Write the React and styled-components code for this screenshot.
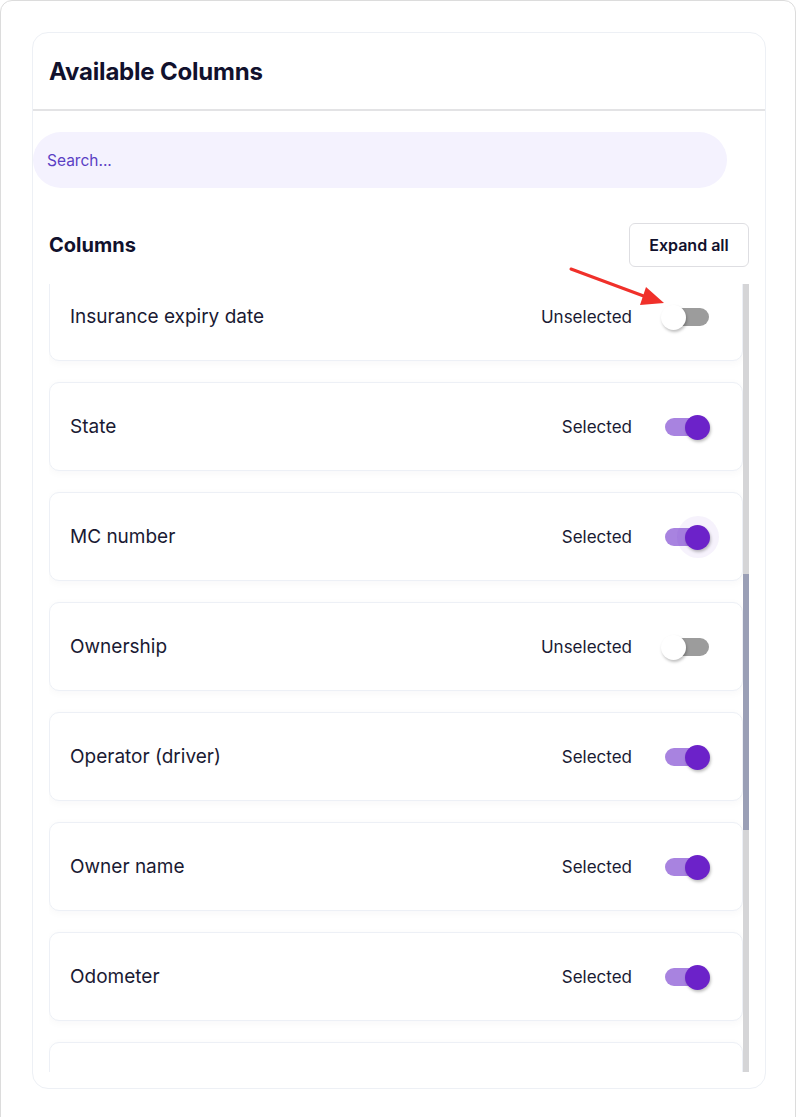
import React, { useLayoutEffect, useRef } from "react";
import styled, { createGlobalStyle } from "styled-components";

const GlobalStyle = createGlobalStyle`
  html, body {
    margin: 0;
    padding: 0;
    background: #ffffff;
    font-family: "Inter", "Noto Sans", sans-serif;
    color: #12122e;
  }
  * { box-sizing: border-box; }
`;

const columns = [
  { name: "Insurance expiry date", on: false },
  { name: "State", on: true },
  { name: "MC number", on: true, hover: true },
  { name: "Ownership", on: false },
  { name: "Operator (driver)", on: true },
  { name: "Owner name", on: true },
  { name: "Odometer", on: true },
  { name: "Fuel type", on: true },
];

const Frame = styled.div`
  position: relative;
  width: 796px;
  min-height: 1140px;
  border: 1px solid #dcdcdc;
  border-radius: 12px;
  padding: 31px 0 0 31px;
`;

const Card = styled.div`
  width: 734px;
  height: 1057px;
  border: 1px solid #edf0f5;
  border-radius: 16px;
  display: flex;
  flex-direction: column;
  overflow: hidden;
`;

const Header = styled.div`
  height: 78px;
  padding: 0 16px;
  display: flex;
  align-items: center;
  border-bottom: 2px solid #e3e3e5;
`;

const Title = styled.h2`
  margin: 0;
  font-size: 24px;
  font-weight: 700;
  letter-spacing: -0.2px;
  color: #11112d;
`;

const Body = styled.div`
  flex: 1;
  display: flex;
  flex-direction: column;
  padding: 21px 16px 16px 0;
  min-height: 0;
`;

const Search = styled.input`
  width: 694px;
  height: 56px;
  border: none;
  outline: none;
  border-radius: 28px;
  background: #f4f2fe;
  padding: 0 14px;
  font-family: inherit;
  font-size: 15.5px;
  color: #4a32b8;
  &::placeholder {
    color: #5b3fc4;
  }
`;

const SectionRow = styled.div`
  margin-top: 35px;
  padding-left: 16px;
  display: flex;
  align-items: center;
  justify-content: space-between;
`;

const SectionTitle = styled.h3`
  margin: 0;
  font-size: 20px;
  font-weight: 700;
  color: #11112d;
`;

const ExpandButton = styled.button`
  width: 120px;
  height: 44px;
  border: 1px solid #dedee2;
  border-radius: 6px;
  background: #ffffff;
  font-family: inherit;
  font-size: 16px;
  font-weight: 600;
  color: #11112d;
`;

const ListArea = styled.div`
  margin: 17px 0 0 16px;
  flex: 1;
  min-height: 0;
  display: flex;
`;

const List = styled.div`
  flex: 1;
  min-height: 0;
  overflow: hidden;
  display: flex;
  flex-direction: column;
  gap: 21px;
`;

const ScrollTrack = styled.div`
  width: 6px;
  background: #d5d5d7;
  display: flex;
  flex-direction: column;
`;

const ScrollThumb = styled.div`
  margin-top: 290px;
  height: 256px;
  background: #9a9fb6;
`;

const Item = styled.div`
  flex: 0 0 89px;
  border: 1px solid #edf0f6;
  border-radius: 10px;
  background: #ffffff;
  box-shadow: 0 2px 8px rgba(20, 20, 60, 0.035);
  display: flex;
  align-items: center;
  padding: 0 33px 0 20px;
`;

const Label = styled.span`
  flex: 1;
  font-size: 19px;
  color: #1a1a33;
`;

const Status = styled.span`
  font-size: 17px;
  color: #1a1a33;
  margin-right: 33px;
`;

const Track = styled.div`
  position: relative;
  width: 44px;
  height: 18px;
  border-radius: 9px;
  background: ${(p) => (p.$on ? "#a883e0" : "#9c9c9c")};
`;

const Halo = styled.div`
  position: absolute;
  top: -12px;
  left: 12px;
  width: 42px;
  height: 42px;
  border-radius: 50%;
  background: rgba(109, 34, 201, 0.06);
`;

const Thumb = styled.div`
  position: absolute;
  top: -3px;
  left: ${(p) => (p.$on ? "20px" : "-4px")};
  width: 25px;
  height: 25px;
  border-radius: 50%;
  background: ${(p) => (p.$on ? "#6c22c9" : "#ffffff")};
  box-shadow: 1px 2px 3px rgba(0, 0, 0, 0.25);
`;

const Arrow = styled.svg`
  position: absolute;
  left: 0;
  top: 0;
  pointer-events: none;
`;

function Toggle({ on, hover }) {
  return (
    <Track $on={on}>
      {hover && <Halo />}
      <Thumb $on={on} />
    </Track>
  );
}

export default function App() {
  const listRef = useRef(null);

  useLayoutEffect(() => {
    if (listRef.current) listRef.current.scrollTop = 12;
  }, []);

  return (
    <>
      <GlobalStyle />
      <Frame>
        <Card>
          <Header>
            <Title>Available Columns</Title>
          </Header>
          <Body>
            <Search placeholder="Search..." />
            <SectionRow>
              <SectionTitle>Columns</SectionTitle>
              <ExpandButton>Expand all</ExpandButton>
            </SectionRow>
            <ListArea>
              <List ref={listRef}>
                {columns.map((c) => (
                  <Item key={c.name}>
                    <Label>{c.name}</Label>
                    <Status>{c.on ? "Selected" : "Unselected"}</Status>
                    <Toggle on={c.on} hover={c.hover} />
                  </Item>
                ))}
              </List>
              <ScrollTrack>
                <ScrollThumb />
              </ScrollTrack>
            </ListArea>
          </Body>
        </Card>
        <Arrow width="796" height="400" viewBox="0 0 796 400">
          <line x1="570" y1="268" x2="648" y2="297" stroke="#f0302a" strokeWidth="3" strokeLinecap="round" />
          <polygon points="663,302 645,286 639,304" fill="#f0302a" />
        </Arrow>
      </Frame>
    </>
  );
}
